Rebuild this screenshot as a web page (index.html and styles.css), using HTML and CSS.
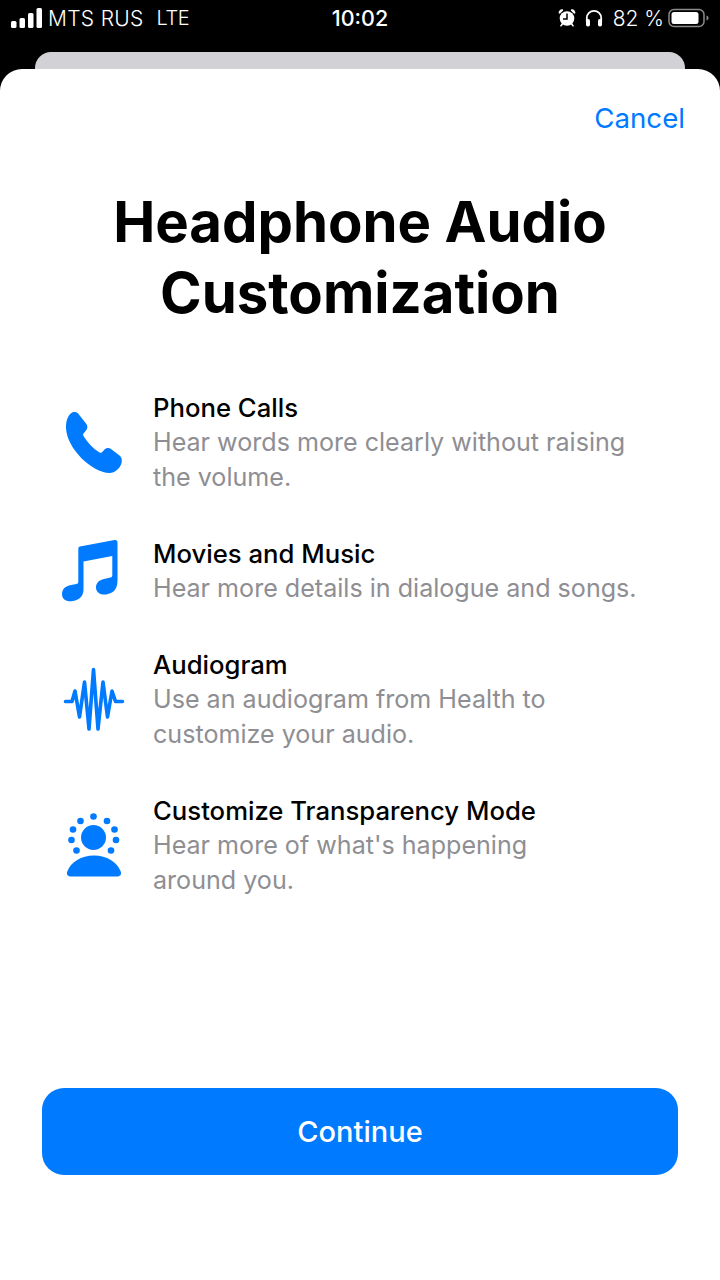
FILE: index.html
```html
<!DOCTYPE html>
<html lang="en">
<head>
<meta charset="utf-8">
<title>Headphone Audio Customization</title>
<link rel="stylesheet" href="styles.css">
</head>
<body>
<div class="screen">
  <header class="status">
    <div class="status-left">
      <svg class="signal" width="32" height="20" viewBox="0 0 32 20"><rect x="0" y="13" width="5.500" height="7" rx="1.500"/><rect x="8.500" y="10" width="5.500" height="10" rx="1.500"/><rect x="17" y="5" width="5.500" height="15" rx="1.500"/><rect x="25.500" y="0" width="5.500" height="20" rx="1.500"/></svg>
      <span class="carrier">MTS RUS</span>
      <span class="net">LTE</span>
    </div>
    <div class="status-time">10:02</div>
    <div class="status-right">
      <svg class="alarm" width="18" height="20" viewBox="0 0 18 20"><circle cx="9" cy="10.500" r="7.300" fill="#fff"/><path d="M.6 5.200C.4 2.600 2.400.8 4.800 1.200L5.200 2.400 1.800 5.800ZM17.400 5.200C17.600 2.600 15.600.8 13.200 1.200L12.800 2.400 16.200 5.800ZM3.600 15.500 2 18 3 18.800 5.200 16.500ZM14.400 15.500 16 18 15 18.800 12.800 16.500Z" fill="#fff"/><path d="M9 5.500V11H5" fill="none" stroke="#000" stroke-width="1.500"/></svg>
      <svg class="phones" width="18" height="18" viewBox="0 0 18 18"><path d="M1.800 13V9a7.200 7.200 0 0 1 14.400 0v4" fill="none" stroke="#fff" stroke-width="1.800"/><rect x="1" y="10" width="4" height="7.500" rx="1.800" fill="#fff"/><rect x="13" y="10" width="4" height="7.500" rx="1.800" fill="#fff"/></svg>
      <span class="pct">82 %</span>
      <svg class="battery" width="42" height="20" viewBox="0 0 42 20"><rect x="1" y="1.500" width="35" height="17" rx="5" fill="none" stroke="#8a8a8a" stroke-width="1.500"/><rect x="3.500" y="4" width="27" height="12" rx="2.500" fill="#fff"/><path d="M38.500 7.500c1.500.4 2 1.400 2 2.500s-.5 2.100-2 2.500Z" fill="#8a8a8a"/></svg>
    </div>
  </header>
  <div class="backcard"></div>
  <main class="sheet">
    <div class="cancel-row"><span class="cancel">Cancel</span></div>
    <h1 class="title">Headphone Audio<br>Customization</h1>
    <ul class="features">
      <li class="feature">
        <svg class="icon" viewBox="0 7 90 70"><path d="M22 11.500C24.500 10.500 27 11 28.500 13L36 22.500C38 25 37.700 27.500 36 29.500L33.500 32.500C33 33.500 33 34 33.500 35C37.500 41.500 43 47.500 49.500 51.500C50.500 52 51 52 52 51.200L54.500 48.500C56.500 46.800 59 46.700 61 48L69.500 54.500C71.800 56.500 72.300 59 71.500 62C70 67.500 65 72 59.500 72C42 71.500 17 48 16 27C16 20 17.500 14.500 22 11.500Z"/></svg>
        <div class="copy"><h2 class="name">Phone Calls</h2><p class="desc">Hear words more clearly without raising the volume.</p></div>
      </li>
      <li class="feature">
        <svg class="icon" viewBox="0 5.500 90 70"><path d="M30 16 64.500 9.500C66.500 9.200 67.500 10 67.500 12V50C67.500 58 64 62 58 63.500C53 65 46.500 63.500 46 57.500C45.800 52.500 49 49.500 54 48.500L60.500 47C61.700 46.700 62.300 46 62.300 44.800V25.500L33.500 31V59C33.500 66 29 69.500 23 70.500C17 71.500 12 69.500 12 63.500C12 58.500 15.500 55.500 21 54.500L26.500 53.500C27.700 53.200 28.300 52.500 28.300 51.300V18.500C28.300 17 29 16.200 30 16Z"/></svg>
        <div class="copy"><h2 class="name">Movies and Music</h2><p class="desc">Hear more details in dialogue and songs.</p></div>
      </li>
      <li class="feature">
        <svg class="icon" viewBox="0 10 90 70"><polyline class="wave" points="15.500,46.500 22,46.500 25,36 29.500,62 34.500,27 39,74 43.500,14.500 48,74 53,27 57.500,62 62,36 65.500,46.500 72.500,46.500"/></svg>
        <div class="copy"><h2 class="name">Audiogram</h2><p class="desc">Use an audiogram from Health to customize your audio.</p></div>
      </li>
      <li class="feature">
        <svg class="icon" viewBox="0 11 90 70"><circle cx="43.500" cy="37.500" r="12.500"/><circle cx="43.500" cy="16.500" r="3.300"/><circle cx="30.500" cy="21" r="3.300"/><circle cx="57" cy="21" r="3.300"/><circle cx="23" cy="29.500" r="3.300"/><circle cx="64.500" cy="29.500" r="3.300"/><circle cx="21.500" cy="40" r="3.300"/><circle cx="66" cy="40" r="3.300"/><circle cx="26.500" cy="50.500" r="3.300"/><circle cx="61" cy="50.500" r="3.300"/><path d="M21 76.500C17.500 76.500 16 74 17.500 71C21 62 31 55.500 44 55.500C57 55.500 67 62 70.500 71C72 74 70.500 76.500 67 76.500Z"/></svg>
        <div class="copy"><h2 class="name">Customize Transparency Mode</h2><p class="desc">Hear more of what's happening<br>around you.</p></div>
      </li>
    </ul>
    <div class="action"><button class="continue" type="button">Continue</button></div>
  </main>
</div>
</body>
</html>
```
FILE: styles.css
```css
* { box-sizing: border-box; margin: 0; padding: 0; }
html, body { background: #000; }
body { width: 720px; height: 1280px; overflow: hidden; font-family: Inter, "Liberation Sans", sans-serif; }
.screen { width: 720px; height: 1280px; display: flex; flex-direction: column; background: #000; }

.status { height: 52px; padding: 0 10px 16px; display: grid; grid-template-columns: 1fr auto 1fr; align-items: center; color: #fff; font-size: 21px; }
.status-left { display: flex; align-items: center; }
.signal { fill: #fff; margin-left: 1px; margin-right: 5px; }
.carrier { font-weight: 300; letter-spacing: .3px; }
.net { font-weight: 300; margin-left: 13px; font-size: 20px; letter-spacing: -.5px; }
.status-time { font-weight: 500; font-size: 21.500px; }
.status-right { display: flex; align-items: center; justify-content: flex-end; }
.alarm { margin-right: 9px; }
.phones { margin-right: 10px; }
.pct { font-weight: 300; margin-right: 4px; }

.backcard { height: 17px; margin: 0 35px; background: #d2d2d6; border-radius: 16px 16px 0 0; }
.sheet { flex: 1; background: #fff; border-radius: 22px 22px 0 0; display: flex; flex-direction: column; }
.cancel-row { display: flex; justify-content: flex-end; padding: 32px 35px 0 0; }
.cancel { font-size: 27.700px; line-height: 34px; color: #007aff; }
.title { margin-top: 51px; font-size: 56.300px; line-height: 71px; font-weight: 700; text-align: center; color: #000; }

.features { list-style: none; margin-top: 62px; padding-left: 50px; padding-right: 70px; display: flex; flex-direction: column; gap: 41px; }
.feature { display: flex; align-items: center; }
.icon { width: 90px; height: 70px; margin-right: 13px; flex: none; fill: #007aff; }
.wave { fill: none; stroke: #007aff; stroke-width: 3.600; stroke-linecap: round; stroke-linejoin: round; }
.name { font-size: 25.700px; line-height: 35px; font-weight: 550; color: #000; }
.desc { font-size: 25.100px; line-height: 35px; font-weight: 400; color: #8e8e93; }

.action { margin-top: auto; padding: 0 42px 105px; }
.continue { display: block; width: 100%; height: 87px; border: 0; border-radius: 22px; background: #007aff; color: #fff; font-family: inherit; font-size: 29px; font-weight: 550; }
```
